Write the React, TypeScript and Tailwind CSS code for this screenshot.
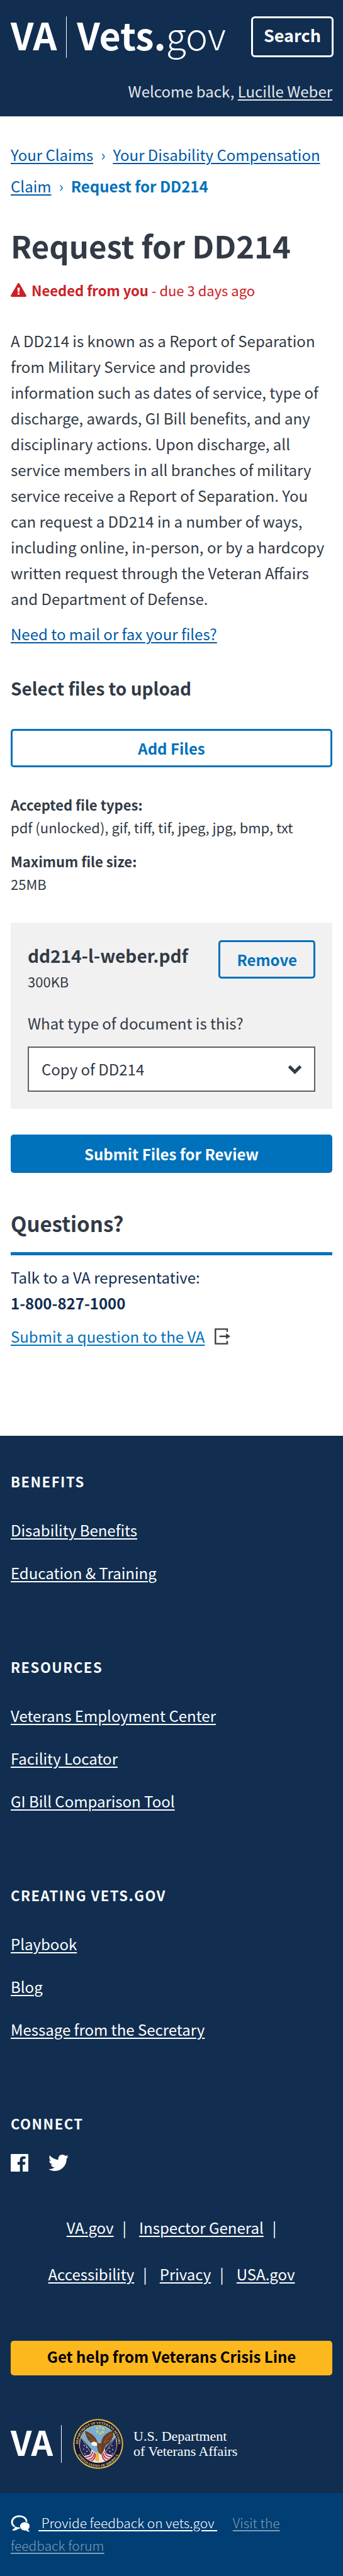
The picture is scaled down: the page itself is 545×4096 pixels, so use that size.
import { FaTwitter } from "react-icons/fa";

const footerGroups = [
  { title: "BENEFITS", links: ["Disability Benefits", "Education & Training"] },
  {
    title: "RESOURCES",
    links: ["Veterans Employment Center", "Facility Locator", "GI Bill Comparison Tool"],
  },
  { title: "CREATING VETS.GOV", links: ["Playbook", "Blog", "Message from the Secretary"] },
];

const legalLinks = ["VA.gov", "Inspector General", "Accessibility", "Privacy", "USA.gov"];

const link = "underline decoration-2 underline-offset-[3px]";

function WarningIcon() {
  return (
    <svg viewBox="0 0 25 22" className="h-[22px] w-[25px] shrink-0" aria-hidden="true">
      <path d="M11 1a1.7 1.7 0 0 1 3 0l10.7 18.6A1.6 1.6 0 0 1 23.300 22H1.700A1.600 1.600 0 0 1 .3 19.600z" fill="#cd2026" />
      <path d="M10.700 7.500h3.600l-.5 6.800h-2.600zM11 15.600h3v3h-3z" fill="#fff" />
    </svg>
  );
}

function ChevronDownIcon() {
  return (
    <svg viewBox="0 0 23 17" className="pointer-events-none absolute right-[21px] h-[17px] w-[23px]" aria-hidden="true">
      <path d="M2.500 3.500l9 9 9-9" fill="none" stroke="#323a45" strokeWidth="5" />
    </svg>
  );
}

function ExitIcon() {
  return (
    <svg viewBox="0 0 29 30" className="h-[26px] w-[25px] shrink-0" aria-hidden="true">
      <path d="M23.200 6.500V1.500H1.500v27h21.700v-5" fill="none" stroke="#3e3e40" strokeWidth="2.800" />
      <path d="M9 14.800h13" stroke="#3e3e40" strokeWidth="2.800" />
      <path d="M21 9.600l8 5.200-8 5.200z" fill="#3e3e40" />
    </svg>
  );
}

function FacebookIcon() {
  return (
    <svg viewBox="0 0 33 33" className="size-7" aria-hidden="true">
      <path
        fill="#fff"
        d="M1.500 0h30A1.500 1.500 0 0 1 33 1.500v30a1.500 1.500 0 0 1-1.500 1.500h-9V20h4.300l.7-5.200h-5V11.600c0-1.500.4-2.400 2.500-2.400h2.700V4.700c-.5 0-2-.2-3.900-.2-3.900 0-6.600 2.400-6.600 6.700v3.600h-4.400V20h4.400v13H1.500A1.500 1.500 0 0 1 0 31.500v-30A1.500 1.500 0 0 1 1.500 0z"
      />
    </svg>
  );
}

function CommentsIcon() {
  return (
    <svg viewBox="26 40 112 100" className="inline h-[27px] w-[31px] align-[-6px]" aria-hidden="true">
      <path d="M118 80C116 58 98 47 76 47 50 47 32 62 32 82c0 11 6 20 15 26" fill="none" stroke="#fff" strokeWidth="10.500" />
      <path d="M41 101l10 6c-3 9-8 15-17 21v4c16 0 27-4 34-10l10-1 1-9H62z" fill="#fff" />
      <path d="M108 83c17 0 28 10 28 23 0 8-4 14-9 18 1 6 4 9 8 12v3c-9 0-16-3-20-8-23 2-35-10-35-25 0-13 11-23 28-23z" fill="#fff" />
    </svg>
  );
}

function Seal() {
  return (
    <svg viewBox="0 0 282 282" className="size-20 shrink-0" role="img" aria-label="Department of Veterans Affairs seal">
      <defs>
        <path id="seal-top" d="M33.800 176A112.500 112.500 0 1 1 248.200 176" />
        <path id="seal-bottom" d="M17 171A127 127 0 0 0 265 171" />
        <clipPath id="seal-disc">
          <circle cx="141" cy="141" r="104" />
        </clipPath>
      </defs>
      <circle cx="141" cy="141" r="141" fill="#8a7326" />
      <circle cx="141" cy="141" r="138" fill="#e9cb55" />
      <circle cx="141" cy="141" r="133" fill="#141538" />
      <circle cx="141" cy="141" r="107" fill="#e9cb55" />
      <circle cx="141" cy="141" r="104" fill="#79aed0" />
      <g clipPath="url(#seal-disc)">
        <path d="M44 104l58 66 6 54-40 8-34-50z" fill="#23285a" />
        <path d="M238 104l-60 62-4 54 40 6 34-44z" fill="#23285a" />
        <path d="M60 212c20-16 38 6 44-40l26 20 26-4 22-22c2 40 24 30 44 40l-34 40-48 20-50-8z" fill="#efe6e8" />
        <g stroke="#b3263a" strokeWidth="6" fill="none">
          <path d="M66 218c20-8 34 4 46-34" />
          <path d="M78 230c24-6 34-4 44-40" />
          <path d="M94 240c18-6 28-14 34-44" />
          <path d="M218 216c-20-8-32 0-42-32" />
          <path d="M206 228c-24-6-30-8-38-36" />
          <path d="M190 240c-16-8-24-16-28-42" />
        </g>
        <path d="M128 192h16l2 48-22-6z" fill="#e8b93a" />
        <path d="M46 106l64 100M236 104l-60 92" stroke="#d9c27a" strokeWidth="3" />
        <g fill="#e8eaf2">
          <circle cx="62" cy="150" r="3" />
          <circle cx="76" cy="160" r="3" />
          <circle cx="60" cy="170" r="3" />
          <circle cx="78" cy="182" r="3" />
          <circle cx="66" cy="196" r="3" />
          <circle cx="218" cy="150" r="3" />
          <circle cx="204" cy="164" r="3" />
          <circle cx="222" cy="172" r="3" />
          <circle cx="206" cy="184" r="3" />
          <circle cx="220" cy="196" r="3" />
        </g>
      </g>
      <path
        d="M138 134C130 108 112 84 68 68c-2 10 2 18 6 24-2 8 4 14 8 18-2 8 6 12 12 16 0 6 8 10 16 12l18 10 8 14c4 24 10 30 18 38 10-4 18-16 22-36 4-8 8-16 18-22 10-6 14-10 14-16 8-4 12-12 10-18 8-6 10-14 6-20 4-8 4-14-2-20-42 14-60 34-64 68-6 4-14 4-20-2z"
        fill="#6b3d22"
      />
      <path d="M80 88c18 10 34 24 44 44M94 116c10 4 20 10 28 20M216 88c-20 10-36 26-42 48M202 120c-10 4-18 8-26 18M150 150l2 36" stroke="#9a6337" strokeWidth="4" fill="none" />
      <path d="M134 134c-12-8-26-8-34 4l6 3-4 8c12-2 20 6 34 4z" fill="#f6f3ee" />
      <g fill="#f2d24a">
        {[
          [152, 46],
          [134, 52],
          [170, 54],
          [136, 72],
          [168, 74],
          [153, 82],
        ].map(([x, y]) => (
          <path key={`${x}-${y}`} transform={`translate(${x} ${y})`} d="M0-9l2.500 6H9L4 1l2 7-6-4-6 4 2-7-5-4h6.500z" />
        ))}
      </g>
      <g fill="#e9d67a" fontSize="19" fontWeight="700" fontFamily="Liberation Serif, serif">
        <text textAnchor="middle">
          <textPath href="#seal-top" startOffset="50%">DEPARTMENT OF VETERANS AFFAIRS</textPath>
        </text>
        <text textAnchor="middle">
          <textPath href="#seal-bottom" startOffset="50%">UNITED STATES OF AMERICA</textPath>
        </text>
      </g>
    </svg>
  );
}

export default function App() {
  return (
    <div className="min-h-screen bg-white font-['Noto_Sans_CJK_SC','Noto_Sans',sans-serif] text-[24px] leading-9 text-[#323a45]">
      <header className="bg-[#112e51] pt-[26px] pb-[22px] text-white">
        <div className="flex items-start justify-between pr-[15px] pl-[17px]">
          <a href="#home" className="flex items-start text-[59px] leading-[58px] whitespace-nowrap">
            <span className="font-bold">VA</span>
            <span className="mr-4 ml-[15px] h-[66px] w-px bg-white" />
            <span>
              <span className="font-bold">Vets.</span>
              <span className="font-light">gov</span>
            </span>
          </a>
          <button type="button" className="rounded-md border-[3px] border-white px-[17px] pb-[6px] text-[27px] leading-[53px] font-bold">
            Search
          </button>
        </div>
        <p className="mt-[35px] px-[17px] text-right text-[#e4e6ea]">
          Welcome back, <a href="#profile" className={link}>Lucille Weber</a>
        </p>
      </header>

      <main className="px-[17px] pb-[140px]">
        <nav aria-label="Breadcrumb" className="pt-9 leading-[50px] text-[#0059a5]">
          <a href="#claims" className={link}>Your Claims</a>
          <span className="mx-3 text-[#0071bb]">›</span>
          <a href="#claim" className={link}>Your Disability Compensation Claim</a>
          <span className="mx-3 text-[#0071bb]">›</span>
          <strong className="font-bold text-[#0071bb]">Request for DD214</strong>
        </nav>

        <h1 className="mt-[39px] text-[49px] leading-[60px] font-bold">Request for DD214</h1>
        <p className="mt-[25px] flex items-center gap-2 text-[22px] leading-8 text-[#cd2026]">
          <WarningIcon />
          <span>
            <strong className="font-bold">Needed from you</strong> - due 3 days ago
          </span>
        </p>
        <p className="mt-11 leading-[41px]">
          A DD214 is known as a Report of Separation from Military Service and provides information
          such as dates of service, type of discharge, awards, GI Bill benefits, and any
          disciplinary actions. Upon discharge, all service members in all branches of military
          service receive a Report of Separation. You can request a DD214 in a number of ways,
          including online, in-person, or by a hardcopy written request through the Veteran Affairs
          and Department of Defense.
        </p>
        <p className="mt-[18px] text-[#0059a5]">
          <a href="#mail" className={link}>Need to mail or fax your files?</a>
        </p>

        <h2 className="mt-12 text-[28px] leading-10 font-bold">Select files to upload</h2>
        <button type="button" className="mt-[45px] w-full rounded-[5px] border-[3px] border-[#0071bb] leading-[55px] font-bold text-[#0071bb]">
          Add Files
        </button>
        <dl className="mt-[41px] text-[22px] leading-9">
          <dt className="font-bold">Accepted file types:</dt>
          <dd>pdf (unlocked), gif, tiff, tif, jpeg, jpg, bmp, txt</dd>
          <dt className="mt-[18px] font-bold">Maximum file size:</dt>
          <dd>25MB</dd>
        </dl>

        <section className="mt-11 bg-[#f1f1f1] px-[27px] pt-7 pb-[27px]">
          <div className="flex items-start justify-between">
            <div className="pt-1">
              <h3 className="text-[28px] leading-10 font-bold">dd214-l-weber.pdf</h3>
              <p className="mt-[5px] text-[22px] leading-8">300KB</p>
            </div>
            <button type="button" className="rounded-[5px] border-[3px] border-[#0071bb] px-[26px] leading-[55px] font-bold text-[#0071bb]">
              Remove
            </button>
          </div>
          <label htmlFor="doc-type" className="mt-[33px] block">What type of document is this?</label>
          <div className="relative mt-[19px] flex items-center">
            <select id="doc-type" className="h-[72px] w-full appearance-none border-2 border-[#5b616b] bg-white pr-14 pl-5">
              <option>Copy of DD214</option>
            </select>
            <ChevronDownIcon />
          </div>
        </section>

        <button type="submit" className="mt-[41px] w-full rounded-[5px] bg-[#0071bb] leading-[61px] font-bold text-white">
          Submit Files for Review
        </button>

        <section className="mt-14 text-[#112e51]">
          <h2 className="border-b-5 border-[#0071bb] pb-[22px] text-[33px] leading-[48px] font-bold text-[#323a45]">Questions?</h2>
          <p className="mt-[14px] leading-[41px]">Talk to a VA representative:</p>
          <p className="leading-[41px] font-bold">1-800-827-1000</p>
          <p className="mt-[15px] flex items-center gap-4 text-[#0071bb]">
            <a href="#question" className={link}>Submit a question to the VA</a>
            <ExitIcon />
          </p>
        </section>
      </main>

      <footer className="bg-[#112e51] text-white">
        <div className="flex flex-col px-[17px] pt-14 pb-[38px]">
          <div className="flex flex-col gap-[115px]">
            {footerGroups.map((group) => (
              <nav key={group.title} aria-label={group.title}>
                <h2 className="text-[22px] leading-8 font-bold tracking-[0.07em]">{group.title}</h2>
                <ul className="mt-11 flex flex-col gap-8">
                  {group.links.map((text) => (
                    <li key={text}>
                      <a href="#footer" className={link}>{text}</a>
                    </li>
                  ))}
                </ul>
              </nav>
            ))}
            <div>
              <h2 className="text-[22px] leading-8 font-bold tracking-[0.07em]">CONNECT</h2>
              <div className="mt-[31px] flex items-center gap-8">
                <a href="#facebook" aria-label="Facebook"><FacebookIcon /></a>
                <a href="#twitter" aria-label="Twitter"><FaTwitter className="size-8" /></a>
              </div>
            </div>
          </div>

          <ul className="mt-[50px] flex flex-wrap justify-center gap-x-5 px-5 leading-[74px]">
            {legalLinks.map((text, i) => (
              <li key={text}>
                <a href="#legal" className={link}>{text}</a>
                {i < legalLinks.length - 1 && <span className="ml-[14px]">|</span>}
              </li>
            ))}
          </ul>

          <button type="button" className="mt-[69px] w-full rounded-[5px] bg-[#fdb81e] pb-[5px] leading-[50px] font-bold text-black">
            Get help from Veterans Crisis Line
          </button>

          <div className="mt-[69px] flex items-center">
            <span className="pb-2 text-[54px] leading-[54px] font-bold">VA</span>
            <span className="mr-[18px] ml-[13px] h-[60px] w-px bg-white" />
            <Seal />
            <p className="ml-4 font-['Liberation_Serif',serif] text-[22px] leading-6">
              U.S. Department
              <br />
              of Veterans Affairs
            </p>
          </div>
        </div>

        <div className="bg-[#003e73] px-[17px] pt-[29px] pb-[33px] text-[21px] leading-9 font-light">
          <CommentsIcon />
          <a href="#feedback" className={`ml-[13px] ${link}`}>&nbsp;Provide feedback on vets.gov&nbsp;</a>{" "}
          <a href="#forum" className={`ml-5 text-[#7f9fb9] ${link}`}>Visit the feedback forum</a>
        </div>
      </footer>
    </div>
  );
}
